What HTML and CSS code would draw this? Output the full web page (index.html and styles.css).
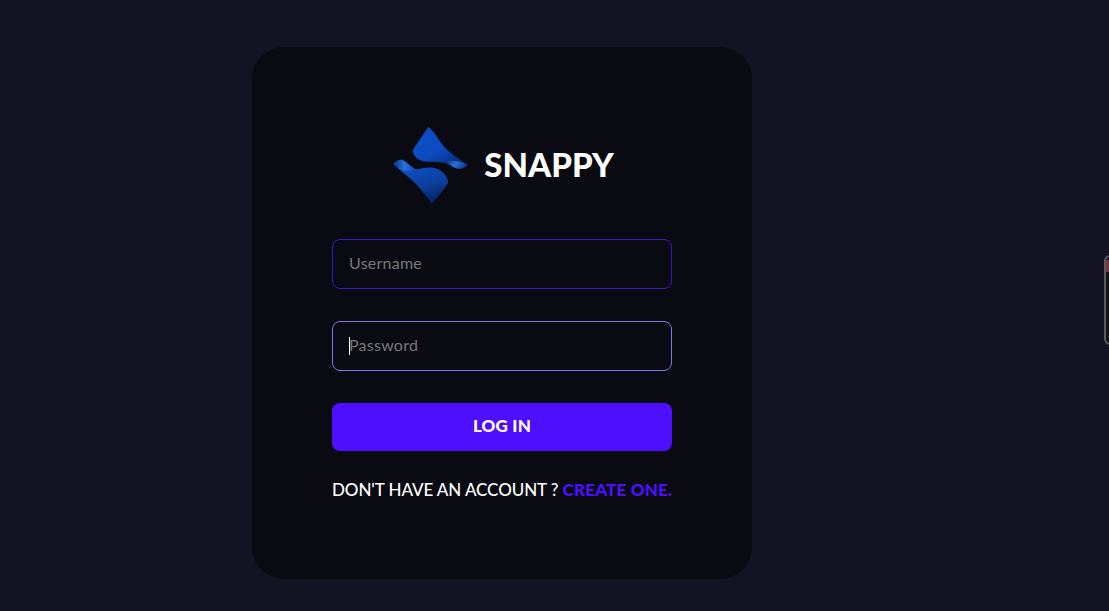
FILE: index.html
```html
<!DOCTYPE html>
<html lang="en">
<head>
<meta charset="utf-8">
<title>Snappy</title>
<link rel="stylesheet" href="styles.css">
</head>
<body>
<main class="page">
  <form class="card">
    <div class="brand">
      <svg class="logo" viewBox="0 15 240 240" aria-hidden="true">
        <defs>
          <linearGradient id="top" x1="0.15" y1="0.1" x2="0.8" y2="0.9">
            <stop offset="0" stop-color="#0a4fc4"/>
            <stop offset="0.55" stop-color="#0d4ac0"/>
            <stop offset="1" stop-color="#082c78"/>
          </linearGradient>
          <linearGradient id="tip" x1="0" y1="0" x2="1" y2="0.4">
            <stop offset="0" stop-color="#0b2f7c"/>
            <stop offset="0.5" stop-color="#2a6fd8"/>
            <stop offset="1" stop-color="#0a3a94"/>
          </linearGradient>
          <linearGradient id="bottom" x1="0.3" y1="0.05" x2="0.6" y2="1">
            <stop offset="0" stop-color="#0f52c8"/>
            <stop offset="0.6" stop-color="#0b3f9f"/>
            <stop offset="1" stop-color="#06245f"/>
          </linearGradient>
          <linearGradient id="left" x1="0" y1="0.5" x2="1" y2="0.5">
            <stop offset="0" stop-color="#0a2f80"/>
            <stop offset="0.5" stop-color="#2a70dc"/>
            <stop offset="1" stop-color="#0c48b4"/>
          </linearGradient>
        </defs>
        <path fill="url(#top)" d="M115 15C135 30 148 60 168 80C188 100 212 113 233 128C224 137 214 142 202 140C188 137 178 126 162 122C137 118 104 124 84 112C74 104 68 94 68 85C82 62 100 38 115 15Z"/>
        <path fill="url(#tip)" d="M168 118C182 113 212 118 233 128C224 137 214 142 202 140C188 137 178 126 168 118Z"/>
        <path fill="url(#bottom)" d="M10 125C25 142 52 160 74 182C92 200 112 225 125 245C142 225 162 205 174 182C176 165 154 140 130 137C110 134 92 140 77 142C64 136 44 112 32 113C24 114 16 119 10 125Z"/>
        <path fill="url(#left)" d="M10 125C16 119 24 114 32 113C44 112 64 136 77 142C62 147 46 148 34 144C24 140 16 131 10 125Z"/>
      </svg>
      <h1 class="title">SNAPPY</h1>
    </div>
    <input class="field" type="text" placeholder="Username" aria-label="Username">
    <div class="field-wrap">
      <input class="field field-active" type="password" placeholder="Password" aria-label="Password">
      <span class="caret"></span>
    </div>
    <button class="submit" type="button">LOG IN</button>
    <p class="note">DON'T HAVE AN ACCOUNT ? <a class="note-link" href="#">CREATE ONE.</a></p>
  </form>
</main>
<div class="side-widget"><span class="side-dot"></span></div>
</body>
</html>
```
FILE: styles.css
```css
* { box-sizing: border-box; }
html, body { height: 100%; }
body {
  margin: 0;
  background: #131324;
  overflow: hidden;
  font-family: "Lato", "Liberation Sans", sans-serif;
}
.page {
  width: 1004px;
  padding-top: 47px;
  display: flex;
  justify-content: center;
}
.card {
  width: 500px;
  height: 532px;
  padding: 80px 80px 0;
  background: #0a0a13;
  border-radius: 32px;
  display: flex;
  flex-direction: column;
  gap: 32px;
}
.brand {
  height: 80px;
  display: flex;
  align-items: center;
  justify-content: center;
  gap: 14px;
}
.logo { width: 80px; height: 80px; display: block; }
.title {
  margin: 0;
  color: #fff;
  font-size: 33px;
  font-weight: 900;
  line-height: 1;
  position: relative;
  top: -3px;
}
.field {
  display: block;
  width: 100%;
  height: 50px;
  padding: 0 16px 4px;
  background: transparent;
  border: 1px solid #3f16c4;
  border-radius: 8px;
  color: #fff;
  font-family: inherit;
  font-size: 16px;
  letter-spacing: 0.25px;
  outline: none;
}
.field::placeholder { color: #77777b; opacity: 1; }
.field-active { border-color: #8a6ff0; }
.field-wrap { position: relative; }
.caret {
  position: absolute;
  left: 17px;
  top: 16px;
  width: 1px;
  height: 18px;
  background: #fff;
}
.submit {
  height: 48px;
  padding: 0 0 4px;
  border: 0;
  border-radius: 8px;
  background: #4e0eff;
  color: #fff;
  font-family: inherit;
  font-size: 17px;
  font-weight: 900;
  letter-spacing: 0.2px;
}
.note {
  margin: 0;
  color: #fff;
  font-size: 17px;
  font-weight: 500;
  line-height: 14px;
  white-space: nowrap;
  letter-spacing: -0.08px;
}
.note-link {
  color: #4e0eff;
  font-weight: 900;
  text-decoration: none;
  letter-spacing: 0.2px;
}
.side-widget {
  position: fixed;
  left: 1104px;
  top: 255px;
  width: 20px;
  height: 90px;
  background: #151518;
  border: 2px solid #5a5a62;
  border-radius: 6px;
  overflow: hidden;
}
.side-dot {
  display: block;
  width: 8px;
  height: 12px;
  margin-top: 3px;
  background: #7a3a3a;
}
```
